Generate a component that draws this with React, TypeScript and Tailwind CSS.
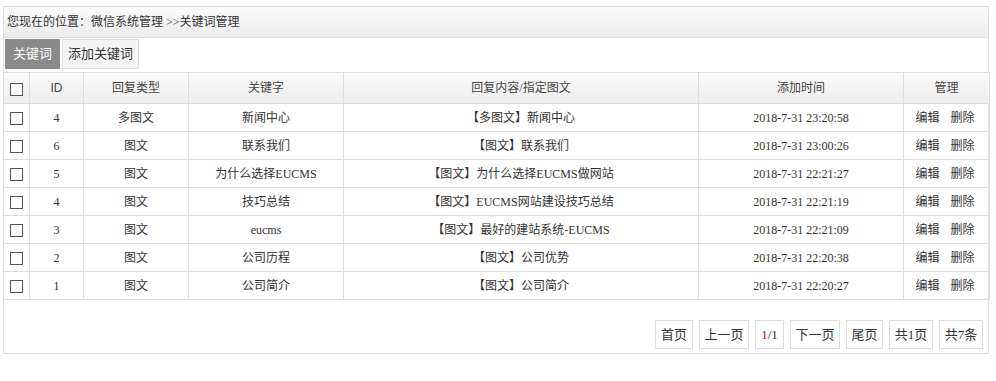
const rows = [
  { id: 4, type: '多图文', key: '新闻中心', content: '【多图文】新闻中心', time: '2018-7-31 23:20:58' },
  { id: 6, type: '图文', key: '联系我们', content: '【图文】联系我们', time: '2018-7-31 23:00:26' },
  { id: 5, type: '图文', key: '为什么选择EUCMS', content: '【图文】为什么选择EUCMS做网站', time: '2018-7-31 22:21:27' },
  { id: 4, type: '图文', key: '技巧总结', content: '【图文】EUCMS网站建设技巧总结', time: '2018-7-31 22:21:19' },
  { id: 3, type: '图文', key: 'eucms', content: '【图文】最好的建站系统-EUCMS', time: '2018-7-31 22:21:09' },
  { id: 2, type: '图文', key: '公司历程', content: '【图文】公司优势', time: '2018-7-31 22:20:38' },
  { id: 1, type: '图文', key: '公司简介', content: '【图文】公司简介', time: '2018-7-31 22:20:27' },
];

function Check() {
  return <span className="inline-block w-[13px] h-[13px] border border-[#555] bg-white align-middle" />;
}

function PageBtn({ w, children }: { w: string; children: React.ReactNode }) {
  return (
    <span className={`${w} h-[29px] flex items-center justify-center border border-[#ddd] bg-white text-[13px] text-[#333] whitespace-nowrap`}>
      {children}
    </span>
  );
}

export default function App() {
  const cell = 'border border-[#ddd] text-center';
  return (
    <div className="w-[996px] h-[381px] bg-white pt-[6px] pl-[3px] font-['Liberation_Serif','Noto_Sans_CJK_SC',serif] text-[12px] text-[#333]">
      <div className="w-[986px] h-[348px] border border-[#ddd] flex flex-col">
        <div className="h-[31px] flex items-center px-[3px] border-b border-[#ddd] bg-gradient-to-b from-[#fbfbfb] to-[#ececec] text-[#333]">
          您现在的位置：微信系统管理 &gt;&gt;关键词管理
        </div>
        <div className="flex gap-[2px] pl-[1px] pt-[1px] h-[34px]">
          <span className="w-[55px] h-[30px] flex items-center justify-center bg-[#8a8a8a] text-white text-[13px]">关键词</span>
          <span className="w-[77px] h-[30px] flex items-center justify-center bg-[#f3f3f3] border border-[#ddd] text-[13px] text-[#333]">添加关键词</span>
        </div>
        <table className="w-[986px] -ml-px border-collapse table-fixed">
          <colgroup>
            <col className="w-[26px]" />
            <col className="w-[54px]" />
            <col className="w-[105px]" />
            <col className="w-[155px]" />
            <col className="w-[355px]" />
            <col className="w-[205px]" />
            <col className="w-[86px]" />
          </colgroup>
          <thead>
            <tr className="h-[31px] bg-gradient-to-b from-[#fafafa] to-[#ededed] text-[#444]">
              <th className={`${cell} font-normal`}><Check /></th>
              <th className={`${cell} font-normal font-['Liberation_Sans',sans-serif]`}>ID</th>
              <th className={`${cell} font-normal`}>回复类型</th>
              <th className={`${cell} font-normal`}>关键字</th>
              <th className={`${cell} font-normal`}>回复内容/指定图文</th>
              <th className={`${cell} font-normal`}>添加时间</th>
              <th className={`${cell} font-normal`}>管理</th>
            </tr>
          </thead>
          <tbody>
            {rows.map((r, i) => (
              <tr key={i} className="h-[28px]">
                <td className={cell}><Check /></td>
                <td className={cell}>{r.id}</td>
                <td className={cell}>{r.type}</td>
                <td className={cell}>{r.key}</td>
                <td className={cell}>{r.content}</td>
                <td className={cell}>{r.time}</td>
                <td className={cell}>
                  <span className="inline-flex gap-[11px] -ml-[3px]"><span>编辑</span><span>删除</span></span>
                </td>
              </tr>
            ))}
          </tbody>
        </table>
        <div className="flex justify-end gap-[6px] pr-[5px] mt-[20px]">
          <PageBtn w="w-[38px]">首页</PageBtn>
          <PageBtn w="w-[50px]">上一页</PageBtn>
          <PageBtn w="w-[29px]"><span className="text-[#c00]">1</span>/1</PageBtn>
          <PageBtn w="w-[50px]">下一页</PageBtn>
          <PageBtn w="w-[37px]">尾页</PageBtn>
          <PageBtn w="w-[44px]">共1页</PageBtn>
          <PageBtn w="w-[44px]">共7条</PageBtn>
        </div>
      </div>
    </div>
  );
}
